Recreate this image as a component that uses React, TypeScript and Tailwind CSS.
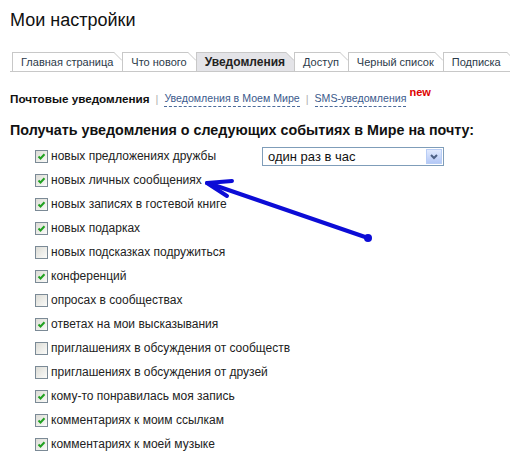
import React from "react";

const tabs = [
  { label: "Главная страница", active: false },
  { label: "Что нового", active: false },
  { label: "Уведомления", active: true },
  { label: "Доступ", active: false },
  { label: "Черный список", active: false },
  { label: "Подписка", active: false },
];

const items: [string, boolean][] = [
  ["новых предложениях дружбы", true],
  ["новых личных сообщениях", true],
  ["новых записях в гостевой книге", true],
  ["новых подарках", true],
  ["новых подсказках подружиться", false],
  ["конференций", true],
  ["опросах в сообществах", false],
  ["ответах на мои высказывания", true],
  ["приглашениях в обсуждения от сообществ", false],
  ["приглашениях в обсуждения от друзей", false],
  ["кому-то понравилась моя запись", true],
  ["комментариях к моим ссылкам", true],
  ["комментариях к моей музыке", true],
];

function Checkbox({ checked }: { checked: boolean }) {
  return (
    <span className="flex h-[13px] w-[13px] shrink-0 items-center justify-center border border-[#7b8a96] bg-gradient-to-br from-[#dcdcd6] to-[#fbfbf9]">
      {checked && (
        <svg width="9" height="9" viewBox="0 0 9 9">
          <path d="M1.5 4.5 L3.5 6.5 L7.5 2.2" fill="none" stroke="#21a121" strokeWidth="2" />
        </svg>
      )}
    </span>
  );
}

export default function App() {
  return (
    <div className="relative h-[476px] w-[510px] overflow-hidden bg-white font-['Liberation_Sans',Arial,sans-serif] text-[#111]">
      <div className="pl-[10px] pt-[9px] text-[18px] leading-[22px] text-[#111]">Мои настройки</div>

      <div className="ml-[10px] mt-[21px] flex h-[20px] border-b border-[#c8c8c8] pl-[2px]">
        {tabs.map((t, i) => (
          <div
            key={t.label}
            className={`relative flex shrink-0 items-center border-l border-t border-[#c8c8c8] pl-[8px] ${
              i === tabs.length - 1 ? "pr-[14px]" : "pr-[9px]"
            } ${t.active ? "bg-[#e4e4e8] text-[12px] font-bold text-[#222]" : "bg-white text-[11px] text-[#2b3a4a]"}`}
          >
            {t.label}
            <svg className="absolute -top-px right-0" width="8" height="9" viewBox="0 0 8 9">
              <polygon points="0,0 8,0 8,8" fill="white" />
              <line x1="0" y1="0.5" x2="8" y2="8.5" stroke="#c8c8c8" strokeWidth="1" />
            </svg>
          </div>
        ))}
      </div>

      <div className="mt-[18px] flex items-center pl-[10px] text-[12px] leading-[16px]">
        <span className="text-[11.7px] font-bold text-[#111]">Почтовые уведомления</span>
        <span className="mx-[6px] text-[11px] text-[#b0b0b0]">|</span>
        <span className="border-b border-dashed border-[#4a6a9a] text-[10.6px] text-[#3b5a8c]">Уведомления в Моем Мире</span>
        <span className="mx-[6px] text-[11px] text-[#b0b0b0]">|</span>
        <span className="border-b border-dashed border-[#4a6a9a] text-[10.6px] text-[#3b5a8c]">SMS-уведомления</span>
        <span className="-mt-[14px] ml-[3px] text-[11px] font-bold text-[#d00]">new</span>
      </div>

      <div className="mt-[14px] pl-[10px] text-[14.3px] font-bold leading-[18px] text-[#111]">
        Получать уведомления о следующих событиях в Мире на почту:
      </div>

      <div className="relative mt-[5px] pl-[35px]">
        <div className="flex flex-col">
          {items.map(([label, checked]) => (
            <div key={label} className="flex h-[24px] items-center gap-[3px] text-[12px] text-[#222]">
              <Checkbox checked={checked} />
              <span>{label}</span>
            </div>
          ))}
        </div>
        <div className="absolute left-[262px] top-[3px] flex h-[19px] w-[182px] items-center border border-[#7f9db9] bg-white pl-[5px] text-[13px] text-[#111]">
          <span className="flex-1">один раз в час</span>
          <span className="mr-px flex h-[15px] w-[16px] items-center justify-center border border-[#b8cdf5] bg-gradient-to-b from-[#e1eafe] to-[#b4c8f6]">
            <svg width="8" height="6" viewBox="0 0 8 6">
              <path d="M1 1 L4 4 L7 1" fill="none" stroke="#4d6185" strokeWidth="2" />
            </svg>
          </span>
        </div>
      </div>

      <svg className="pointer-events-none absolute left-0 top-0" width="510" height="476">
        <g stroke="#0c0cd6" strokeWidth="4" strokeLinecap="round" fill="none">
          <line x1="368" y1="238" x2="208" y2="183" />
          <line x1="207" y1="183" x2="232" y2="181" />
          <line x1="207" y1="183" x2="227" y2="196" />
        </g>
        <circle cx="368" cy="238" r="4" fill="#0c0cd6" />
      </svg>
    </div>
  );
}
